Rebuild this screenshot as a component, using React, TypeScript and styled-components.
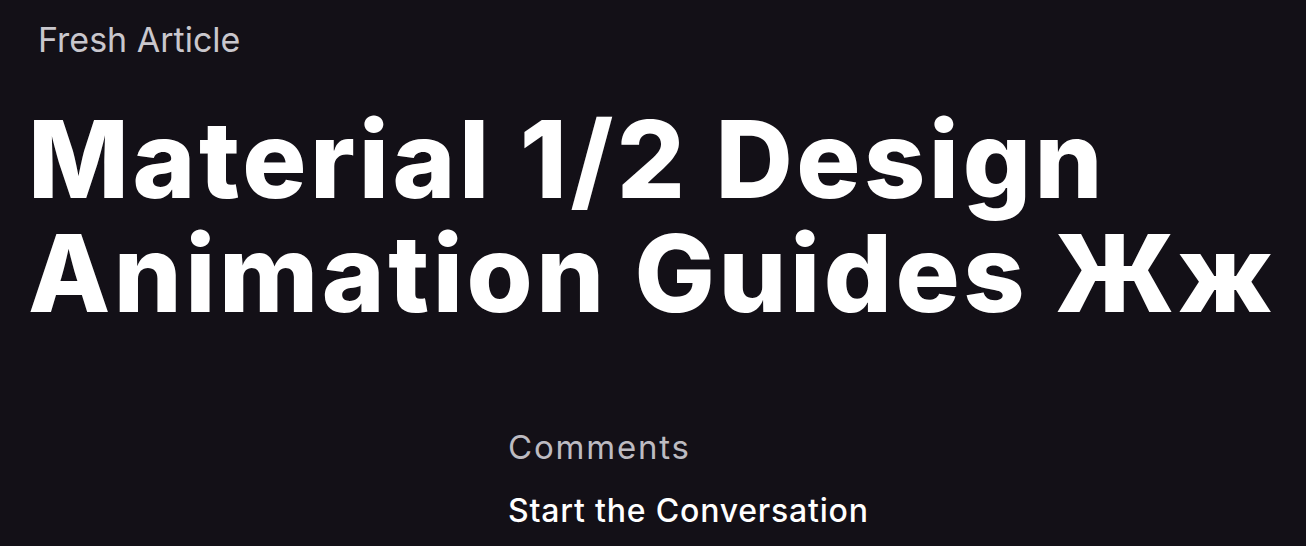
import React from "react";
import styled, { createGlobalStyle } from "styled-components";

const Global = createGlobalStyle`
  html, body { margin: 0; padding: 0; background: #131017; }
  body { font-family: Inter, "Noto Sans", sans-serif; }
`;

const Page = styled.main`
  min-height: 546px;
  background: #131017;
  color: #fff;
  overflow: hidden;
`;

const Header = styled.header`
  padding: 18px 0 0 28px;
`;

const Kicker = styled.div`
  font-family: Inter, sans-serif;
  font-size: 34px;
  line-height: 44px;
  color: #c9c7cd;
  padding-left: 10px;
`;

const Title = styled.h1`
  margin: 40px 0 0;
  font-family: Inter, sans-serif;
  font-weight: 800;
  font-size: 107px;
  line-height: 114px;
  letter-spacing: 3.5px;
  color: #fff;
`;

const Comments = styled.section`
  padding: 96px 0 0 508px;
  display: flex;
  flex-direction: column;
  gap: 22px;
`;

const CommentsLabel = styled.h2`
  margin: 0;
  font-family: Inter, sans-serif;
  font-weight: 400;
  font-size: 33px;
  line-height: 42px;
  letter-spacing: 1.8px;
  color: #bdbbc1;
`;

const CommentsLink = styled.a`
  font-family: Inter, sans-serif;
  font-weight: 500;
  font-size: 32px;
  line-height: 42px;
  letter-spacing: 0.8px;
  color: #fff;
  text-decoration: none;
`;

export default function App() {
  return (
    <Page>
      <Global />
      <Header>
        <Kicker>Fresh Article</Kicker>
        <Title>
          Material 1/2 Design
          <br />
          Animation Guides Жж
        </Title>
      </Header>
      <Comments>
        <CommentsLabel>Comments</CommentsLabel>
        <CommentsLink href="#">Start the Conversation</CommentsLink>
      </Comments>
    </Page>
  );
}
